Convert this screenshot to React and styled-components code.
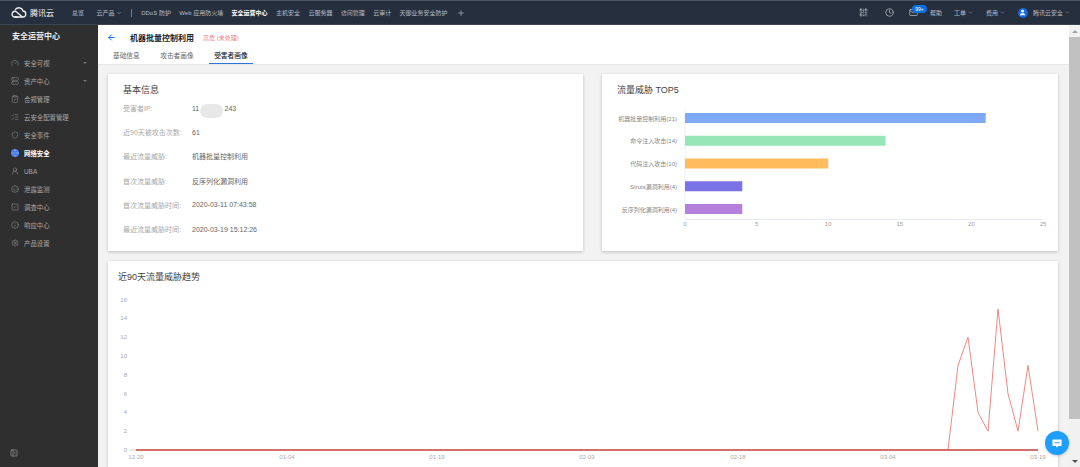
import React from 'react';
import styled, { createGlobalStyle } from 'styled-components';
import {
  ArrowLeft, ChevronDown, Plus, Clock, Mail, User, Gauge, Server, ClipboardCheck, ListChecks,
  Shield, Globe, UserRound, Smile, SquareCheck, Info, Settings, PanelLeftClose, QrCode
} from 'lucide-react';

const Global = createGlobalStyle`
  html, body { margin: 0; padding: 0; height: 100%; overflow: hidden; }
  body { font-family: "Liberation Sans", "Noto Sans CJK SC", sans-serif; background: #f2f2f2; }
  #root { height: 100%; }
`;

const Page = styled.div`
  width: 1080px;
  height: 467px;
  display: flex;
  flex-direction: column;
  overflow: hidden;
  position: relative;
`;

const TopBar = styled.header`
  height: 25px;
  box-sizing: border-box;
  flex: none;
  background: #262f3e;
  border-top: 1px solid #4c5462;
  border-bottom: 1px solid #3c4452;
  display: flex;
  align-items: center;
  color: #b9bec6;
  font-size: 6px;
`;

const Logo = styled.div`
  width: 72px;
  padding-left: 10px;
  box-sizing: border-box;
  flex: none;
  display: flex;
  align-items: center;
  gap: 3px;
  color: #f2f3f5;
  font-size: 8px;
`;

const NavList = styled.nav`
  display: flex;
  align-items: center;
  gap: 8.4px;
  flex: 1;
`;

const NavItem = styled.span`
  display: inline-flex;
  align-items: center;
  gap: 2px;
  white-space: nowrap;
  color: ${p => (p.$active ? '#ffffff' : '#b9bec6')};
  font-weight: ${p => (p.$active ? 700 : 400)};
  margin-left: ${p => p.$ml || 0}px;
`;

const NavDivider = styled.i`
  width: 1px;
  height: 8px;
  background: #767c87;
  margin: 0 1px 0 0;
`;

const RightNav = styled.div`
  display: flex;
  align-items: center;
  margin-right: 10px;
`;

const RightItem = styled.span`
  display: inline-flex;
  align-items: center;
  gap: 2px;
  white-space: nowrap;
  margin-left: ${p => p.$ml || 0}px;
  position: relative;
`;

const Badge = styled.span`
  position: absolute;
  left: 3px;
  top: -3px;
  width: 15px;
  height: 8px;
  border-radius: 4px;
  background: #0a6fe0;
  color: #fff;
  font-size: 5px;
  line-height: 8px;
  text-align: center;
`;

const Avatar = styled.span`
  width: 10px;
  height: 10px;
  border-radius: 50%;
  background: #1268e0;
  color: #fff;
  display: inline-flex;
  align-items: center;
  justify-content: center;
  margin-right: 3px;
`;

const Body = styled.div`
  flex: 1;
  display: flex;
  min-height: 0;
`;

const Sidebar = styled.aside`
  width: 98px;
  flex: none;
  background: #2f2f2f;
  display: flex;
  flex-direction: column;
`;

const SideTitle = styled.div`
  height: 24px;
  line-height: 24px;
  margin-bottom: 5px;
  padding-left: 12px;
  color: #eceded;
  font-size: 8px;
  font-weight: 700;
`;

const SideItem = styled.div`
  height: 18px;
  display: flex;
  align-items: center;
  padding: 0 11px 0 11px;
  gap: 5px;
  font-size: 6.4px;
  color: ${p => (p.$active ? '#ffffff' : '#a9a9a9')};
  font-weight: ${p => (p.$active ? 700 : 400)};
`;

const SideIcon = styled.span`
  width: 8px;
  height: 8px;
  flex: none;
  display: inline-flex;
  align-items: center;
  justify-content: center;
  border-radius: 50%;
  background: ${p => (p.$active ? '#2a66d8' : 'transparent')};
  color: ${p => (p.$active ? '#9cc0ff' : '#9a9a9a')};
`;

const SideLabel = styled.span`
  flex: 1;
`;

const SideCaret = styled.i`
  width: 0;
  height: 0;
  border: 2px solid transparent;
  border-top-color: #777;
  border-bottom: 0;
`;

const SideFoot = styled.div`
  margin-top: auto;
  height: 28px;
  padding-left: 10px;
  display: flex;
  align-items: center;
  color: #9a9a9a;
`;

const Main = styled.main`
  flex: 1;
  min-width: 0;
  display: flex;
  flex-direction: column;
`;

const Header = styled.div`
  height: 40px;
  flex: none;
  box-sizing: border-box;
  background: #fff;
  border-bottom: 1px solid #e6e6e6;
  display: flex;
  flex-direction: column;
`;

const HeadRow = styled.div`
  height: 24px;
  display: flex;
  align-items: center;
  padding-left: 9px;
`;

const HeadTitle = styled.span`
  font-size: 8px;
  font-weight: 700;
  color: #222;
  margin-left: 14px;
`;

const HeadStatus = styled.span`
  font-size: 6px;
  color: #ee7f84;
  margin-left: 9px;
`;

const Tabs = styled.div`
  display: flex;
  padding-left: 10px;
  flex: 1;
`;

const Tab = styled.span`
  padding: 0 5px;
  margin-right: 10.5px;
  height: 15px;
  box-sizing: border-box;
  line-height: 14px;
  font-size: 6.7px;
  color: ${p => (p.$active ? '#222' : '#666')};
  font-weight: ${p => (p.$active ? 500 : 400)};
  border-bottom: ${p => (p.$active ? '1px solid #2c74d8' : '0')};
`;

const Content = styled.div`
  flex: 1;
  min-height: 0;
  padding: 9px 11px 0 10px;
  display: grid;
  grid-template-columns: 475px 456px;
  grid-template-rows: 177px 1fr;
  column-gap: 19px;
  row-gap: 10px;
`;

const Card = styled.section`
  background: #fff;
  box-shadow: 0 1px 3px rgba(0, 0, 0, 0.22);
  grid-column: ${p => (p.$wide ? '1 / 3' : 'auto')};
  min-height: 0;
  overflow: hidden;
`;

const CardTitle = styled.h3`
  margin: 0;
  padding: 10px 0 0 ${p => p.$left || 15}px;
  font-size: 9px;
  line-height: 12px;
  font-weight: 400;
  color: #444;
`;

const InfoList = styled.dl`
  margin: 0;
  padding-left: 15px;
`;

const InfoRow = styled.div`
  height: 24.2px;
  display: flex;
  align-items: center;
  font-size: 7px;
  position: relative;
`;

const InfoLabel = styled.dt`
  width: 69px;
  color: #a9a9a9;
`;

const InfoValue = styled.dd`
  margin: 0;
  color: #666;
`;

const Smudge = styled.span`
  position: absolute;
  left: 77px;
  top: 8px;
  width: 23px;
  height: 14px;
  border-radius: 7px;
  background: #e8e8e8;
`;

const ChartSvg = styled.svg`
  display: block;
  font-family: "Liberation Sans", "Noto Sans CJK SC", sans-serif;
`;

const ScrollTrack = styled.div`
  width: 11px;
  flex: none;
  background: #f1f1f1;
  display: flex;
  flex-direction: column;
  align-items: center;
`;

const ScrollArrow = styled.i`
  height: 12px;
  flex: none;
  display: flex;
  align-items: center;
  &::before {
    content: '';
    border: 3px solid transparent;
    ${p => (p.$down ? 'border-top-color: #505050; border-bottom: 0;' : 'border-bottom-color: #a3a3a3; border-top: 0;')}
  }
`;

const ScrollThumb = styled.div`
  width: 100%;
  height: 382px;
  background: #c1c1c1;
`;

const ScrollFill = styled.div`
  flex: 1;
`;

const ChatButton = styled.button`
  position: absolute;
  left: 1045px;
  top: 431px;
  width: 24px;
  height: 24px;
  padding: 0;
  border: 0;
  border-radius: 50%;
  background: #1e9fff;
  display: flex;
  align-items: center;
  justify-content: center;
  box-shadow: 0 1px 3px rgba(0, 0, 0, 0.2);
`;

const CloudLogo = () => (
  <svg width="17" height="11" viewBox="0 0 34 22" fill="none" stroke="#f2f3f5" strokeWidth="2.6">
    <path d="M9 20 H25 a6 6 0 0 0 1 -12 a8.5 8.5 0 0 0 -16 -1.5" />
    <path d="M25 20 L12 9 a5.8 5.8 0 1 0 -4 11 H15" />
  </svg>
);

const topNav = [
  ['DDoS 防护'], ['Web 应用防火墙'], ['安全运营中心', true], ['主机安全'], ['云服务器'], ['访问管理'], ['云审计'], ['天御业务安全防护']
];

const sideItems = [
  ['安全可视', Gauge, true], ['资产中心', Server, true], ['合规管理', ClipboardCheck], ['云安全配置管理', ListChecks],
  ['安全事件', Shield], ['网络安全', Globe, false, true], ['UBA', UserRound], ['泄露监测', Smile],
  ['调查中心', SquareCheck], ['响应中心', Info], ['产品设置', Settings]
];

const infoRows = [
  ['受害者IP:', '11', true],
  ['近90天被攻击次数:', '61'],
  ['最近流量威胁:', '机器批量控制利用'],
  ['首次流量威胁:', '反序列化漏洞利用'],
  ['首次流量威胁时间:', '2020-03-11 07:43:58'],
  ['最近流量威胁时间:', '2020-03-19 15:12:26']
];

const bars = [
  ['机器批量控制利用(21)', 21, '#7eaaf5'],
  ['命令注入攻击(14)', 14, '#97e6b8'],
  ['代码注入攻击(10)', 10, '#ffbb5c'],
  ['Struts漏洞利用(4)', 4, '#7a72e6'],
  ['反序列化漏洞利用(4)', 4, '#b57fdc']
];

function BarChart() {
  const x0 = 83;
  const unit = 14.32;
  return (
    <ChartSvg width="456" height="150" viewBox="0 0 456 150">
      <line x1={x0} y1="11" x2={x0} y2="123" stroke="#eef0f4" />
      <line x1={x0} y1="123.5" x2={x0 + 25 * unit} y2="123.5" stroke="#e6e9f0" />
      {bars.map(([name, v, color], i) => {
        const y = 17 + i * 22.75;
        return (
          <g key={name}>
            <rect x={x0} y={y} width={v * unit} height="10" fill={color} />
            <text x={x0 - 8} y={y + 7.5} textAnchor="end" fontSize="6" fill="#888">{name}</text>
          </g>
        );
      })}
      {[0, 5, 10, 15, 20, 25].map(t => (
        <text key={t} x={x0 + t * unit} y="130" textAnchor="middle" fontSize="6" fill="#a0a0a0">{t}</text>
      ))}
    </ChartSvg>
  );
}

const peak = [[840, 0], [850, 9], [860, 12], [870, 4], [880, 2], [890, 15], [900, 6], [910, 2], [920, 9], [930, 2]];

function LineChart() {
  const y = v => 167 - v * 9.4;
  const pts = peak.map(([x, v]) => `${x},${y(v)}`).join(' ');
  return (
    <ChartSvg width="950" height="184" viewBox="0 0 950 184">
      {[0, 2, 4, 6, 8, 10, 12, 14, 16].map(t => (
        <text key={t} x="19" y={y(t) + 2} textAnchor="end" fontSize="6" fill="#a8a8a8">{t}</text>
      ))}
      <line x1="22" y1="167" x2="28" y2="167" stroke="#ccc" />
      <polyline points={pts} fill="none" stroke="#e98a86" strokeWidth="1" />
      <line x1="28" y1="167" x2="930" y2="167" stroke="#c4403e" strokeWidth="1.4" />
      {[['12-20', 28], ['01-04', 179], ['01-19', 329], ['02-03', 479], ['02-18', 630], ['03-04', 780], ['03-19', 930]].map(([t, x]) => (
        <text key={t} x={x} y="176" textAnchor="middle" fontSize="6" fill="#a8a8a8">{t}</text>
      ))}
    </ChartSvg>
  );
}

export default function App() {
  return (
    <Page>
      <Global />
      <TopBar>
        <Logo><CloudLogo />腾讯云</Logo>
        <NavList>
          <NavItem>总览</NavItem>
          <NavItem $ml={4}>云产品<ChevronDown size={6} /></NavItem>
          <NavDivider />
          {topNav.map(([label, active]) => <NavItem key={label} $active={active}>{label}</NavItem>)}
          <NavItem $ml={1}><Plus size={8} /></NavItem>
        </NavList>
        <RightNav>
          <RightItem><QrCode size={9} /></RightItem>
          <RightItem $ml={17}><Clock size={9} /></RightItem>
          <RightItem $ml={15}><Mail size={9} /><Badge>99+</Badge></RightItem>
          <RightItem $ml={12}>帮助</RightItem>
          <RightItem $ml={12}>工单<ChevronDown size={5} /></RightItem>
          <RightItem $ml={13}>费用<ChevronDown size={5} /></RightItem>
          <RightItem $ml={13}><Avatar><User size={7} fill="#fff" /></Avatar>腾讯云安全<ChevronDown size={5} /></RightItem>
        </RightNav>
      </TopBar>
      <Body>
        <Sidebar>
          <SideTitle>安全运营中心</SideTitle>
          {sideItems.map(([label, Icon, caret, active]) => (
            <SideItem key={label} $active={active}>
              <SideIcon $active={active}><Icon size={8} strokeWidth={1.5} /></SideIcon>
              <SideLabel>{label}</SideLabel>
              {caret && <SideCaret />}
            </SideItem>
          ))}
          <SideFoot><PanelLeftClose size={8} /></SideFoot>
        </Sidebar>
        <Main>
          <Header>
            <HeadRow>
              <ArrowLeft size={9} color="#0f6fe8" strokeWidth={2.6} />
              <HeadTitle>机器批量控制利用</HeadTitle>
              <HeadStatus>高危 (未处理)</HeadStatus>
            </HeadRow>
            <Tabs>
              <Tab>基础信息</Tab>
              <Tab>攻击者画像</Tab>
              <Tab $active>受害者画像</Tab>
            </Tabs>
          </Header>
          <Content>
            <Card>
              <CardTitle>基本信息</CardTitle>
              <InfoList>
                {infoRows.map(([label, value, masked]) => (
                  <InfoRow key={label}>
                    <InfoLabel>{label}</InfoLabel>
                    <InfoValue>{value}{masked && <><Smudge />&nbsp;&nbsp;&nbsp;&nbsp;&nbsp;&nbsp;&nbsp;&nbsp;&nbsp;&nbsp;&nbsp;&nbsp;&nbsp;243</>}</InfoValue>
                  </InfoRow>
                ))}
              </InfoList>
            </Card>
            <Card>
              <CardTitle>流量威胁 TOP5</CardTitle>
              <BarChart />
            </Card>
            <Card $wide>
              <CardTitle $left={10}>近90天流量威胁趋势</CardTitle>
              <LineChart />
            </Card>
          </Content>
        </Main>
        <ScrollTrack>
          <ScrollArrow />
          <ScrollThumb />
          <ScrollFill />
          <ScrollArrow $down />
        </ScrollTrack>
      </Body>
      <ChatButton aria-label="chat">
        <svg width="10" height="9" viewBox="0 0 12 11">
          <path d="M1 0.5 H11 a0.6 0.6 0 0 1 0.6 0.6 V8 a0.6 0.6 0 0 1 -0.6 0.6 H7.5 L6 10.4 L4.5 8.6 H1 a0.6 0.6 0 0 1 -0.6 -0.6 V1.1 a0.6 0.6 0 0 1 0.6 -0.6 Z" fill="#fff" />
          <rect x="3" y="4" width="6" height="1.2" fill="#1e9fff" />
        </svg>
      </ChatButton>
    </Page>
  );
}
